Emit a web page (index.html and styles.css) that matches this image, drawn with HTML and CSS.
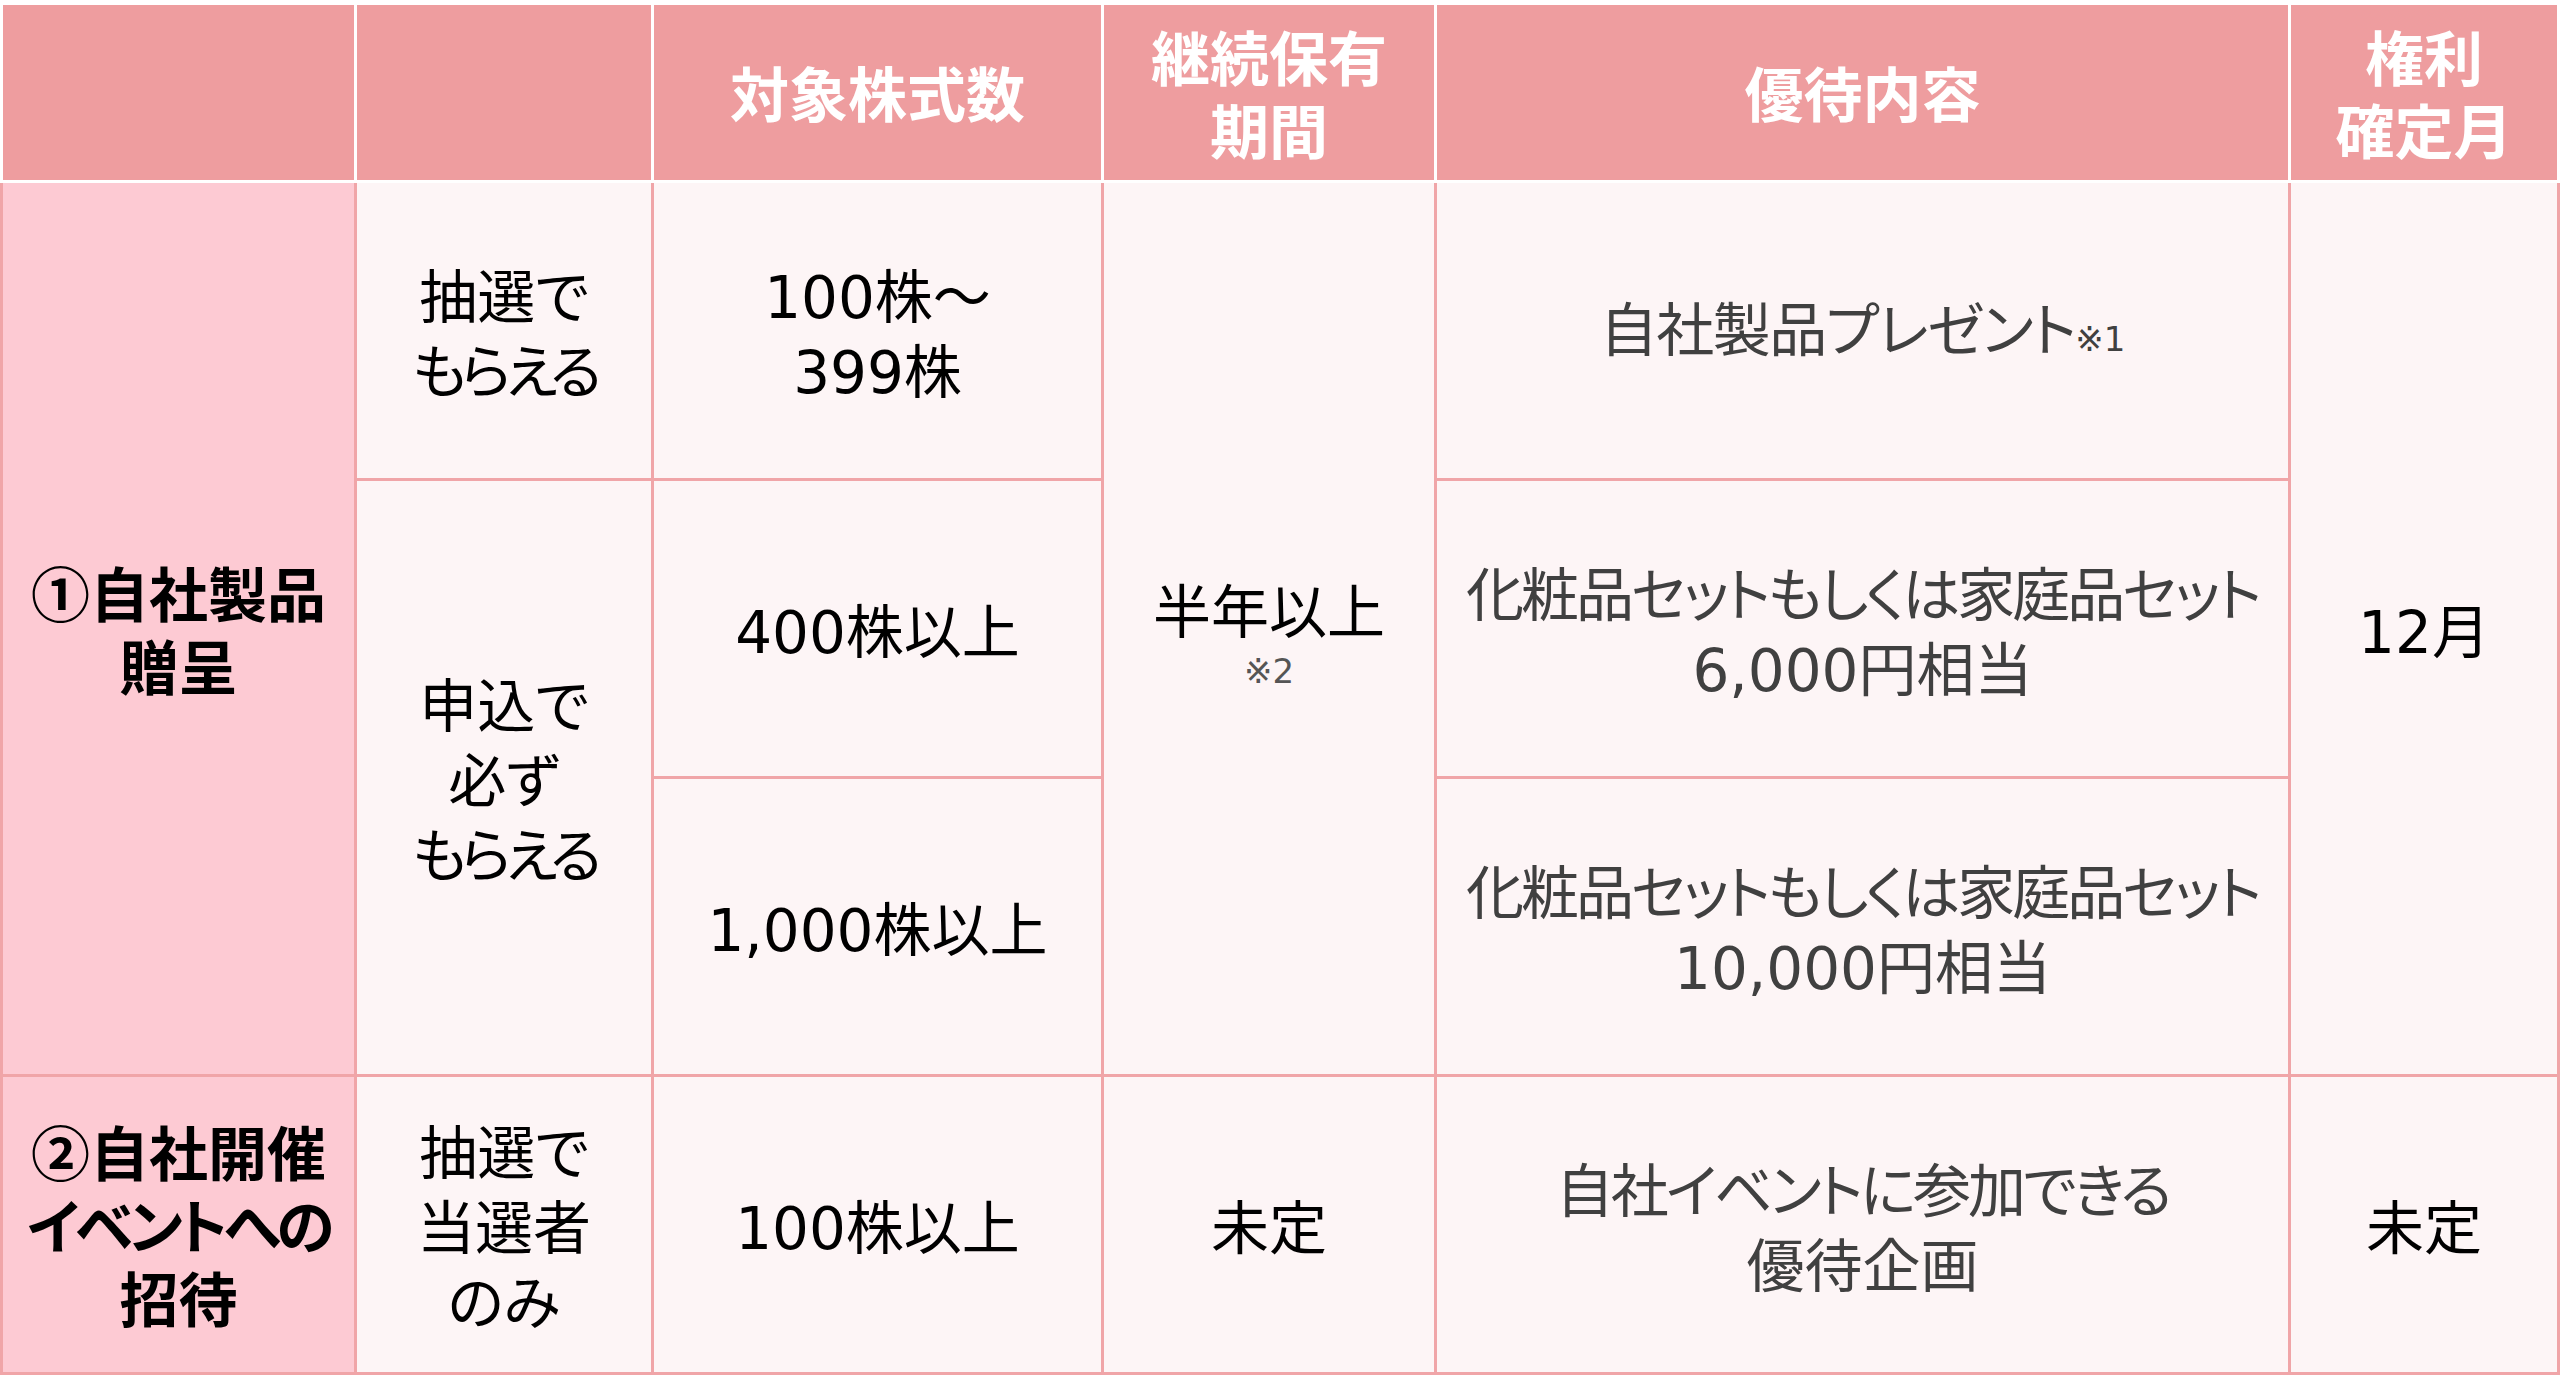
FILE: index.html
```html
<!DOCTYPE html>
<html lang="ja">
<head>
<meta charset="utf-8">
<title>株主優待</title>
<link rel="stylesheet" href="styles.css">
</head>
<body>
<table class="tbl">
  <colgroup>
    <col class="c1"><col class="c2"><col class="c3"><col class="c4"><col class="c5"><col class="c6">
  </colgroup>
  <thead>
    <tr class="hrow">
      <th class="hd"></th>
      <th class="hd"></th>
      <th class="hd">対象株式数</th>
      <th class="hd">継続保有<br>期間</th>
      <th class="hd">優待内容</th>
      <th class="hd">権利<br>確定月</th>
    </tr>
  </thead>
  <tbody>
    <tr class="brow">
      <td class="cat" rowspan="3">①自社製品<br>贈呈</td>
      <td class="cell">抽選で<br><span class="kana">もらえる</span></td>
      <td class="cell">100株～<br>399株</td>
      <td class="cell" rowspan="3"><div class="main">半年以上</div><div class="note">※2</div></td>
      <td class="cell gift"><span class="snug">自社製品プレゼント</span><span class="sup">※1</span></td>
      <td class="cell" rowspan="3">12月</td>
    </tr>
    <tr class="brow">
      <td class="cell" rowspan="2">申込で<br>必ず<br><span class="kana">もらえる</span></td>
      <td class="cell">400株以上</td>
      <td class="cell gift"><span class="tight">化粧品セットもしくは家庭品セット</span><br>6,000円相当</td>
    </tr>
    <tr class="brow">
      <td class="cell">1,000株以上</td>
      <td class="cell gift"><span class="tight">化粧品セットもしくは家庭品セット</span><br>10,000円相当</td>
    </tr>
    <tr class="brow">
      <td class="cat">②自社開催<br><span class="catkana">イベントへの</span><br>招待</td>
      <td class="cell">抽選で<br>当選者<br>のみ</td>
      <td class="cell">100株以上</td>
      <td class="cell">未定</td>
      <td class="cell gift"><span class="tight">自社イベントに参加できる</span><br>優待企画</td>
      <td class="cell">未定</td>
    </tr>
  </tbody>
</table>
</body>
</html>
```

FILE: styles.css
```css
html, body {
  margin: 0;
  padding: 0;
  background: #ffffff;
}

body {
  font-family: "Noto Sans CJK JP", "Noto Sans", sans-serif;
  font-feature-settings: "palt";
}

.tbl {
  margin-top: 2px;
  width: 2557px;
  table-layout: fixed;
  border-collapse: collapse;
  border-spacing: 0;
}

.c1 { width: 354px; }
.c2 { width: 297px; }
.c3 { width: 450px; }
.c4 { width: 333px; }
.c5 { width: 854px; }
.c6 { width: 269px; }

.hrow { height: 178px; }
.brow { height: 298px; }

.hd {
  background: #ee9d9f;
  border: 3px solid #ffffff;
  color: #ffffff;
  font-family: "Liberation Sans", "Noto Sans CJK JP", sans-serif;
  font-weight: 700;
  font-size: 59px;
  line-height: 73px;
  text-align: center;
  vertical-align: middle;
  padding: 10px 0 0 0;
  white-space: nowrap;
}

.cat {
  background: #fdcad3;
  border: 3px solid #f0a5a8;
  color: #000000;
  font-family: "Liberation Sans", "Noto Sans CJK JP", sans-serif;
  font-weight: 700;
  font-size: 59px;
  line-height: 73px;
  text-align: center;
  vertical-align: middle;
  padding: 10px 0 0 0;
  white-space: nowrap;
}

.catkana {
  letter-spacing: -4.5px;
}

.cell {
  background: #fdf5f6;
  border: 3px solid #f0a5a8;
  color: #000000;
  font-family: "DejaVu Sans", "Noto Sans CJK JP", sans-serif;
  font-weight: 400;
  font-size: 58px;
  line-height: 75px;
  text-align: center;
  vertical-align: middle;
  padding: 10px 0 0 0;
  white-space: nowrap;
}

.kana {
  letter-spacing: -6px;
}

.tight {
  letter-spacing: -3px;
}

.snug {
  letter-spacing: -1.5px;
}

.gift {
  color: #404040;
}

.sup {
  font-size: 34px;
  color: #404040;
}

.main {
  line-height: 75px;
}

.note {
  font-size: 34px;
  line-height: 40px;
  color: #555555;
}
```
